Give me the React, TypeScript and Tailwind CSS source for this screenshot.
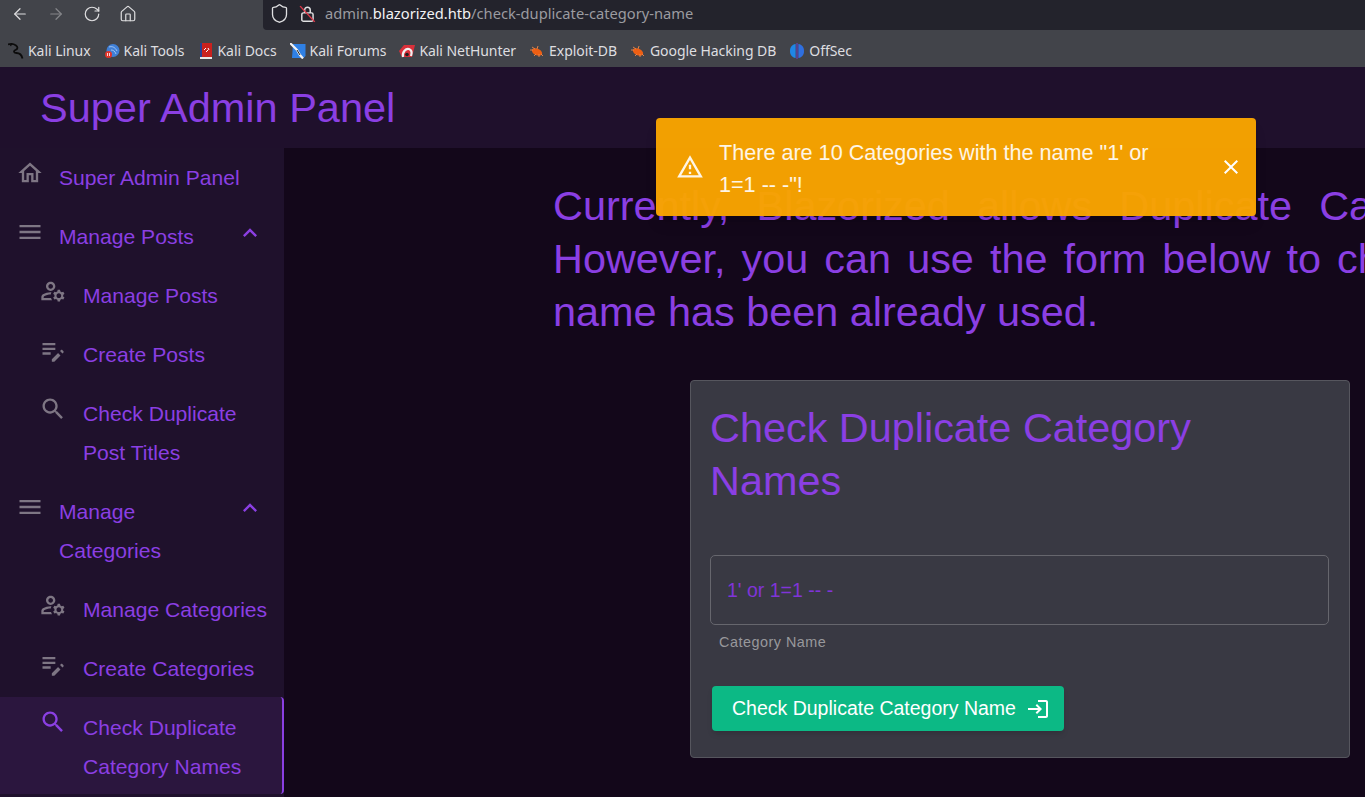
import React from "react";
import { ArrowLeft, ArrowRight, RotateCw, House, Shield } from "lucide-react";

const P = {
  home: "m12 5.69 5 4.5V18h-2v-6H9v6H7v-7.81zM12 3 2 12h3v8h6v-6h2v6h6v-8h3z",
  menu: "M3 18h18v-2H3v2zm0-5h18v-2H3v2zm0-7v2h18V6H3z",
  manage:
    "M4 18v-.65c0-.34.16-.66.41-.81C6.1 15.53 8.03 15 10 15c.03 0 .05 0 .08.01.1-.7.3-1.37.59-1.98-.22-.02-.44-.03-.67-.03-2.42 0-4.68.67-6.61 1.82-.88.52-1.39 1.5-1.39 2.53V20h9.26c-.42-.6-.75-1.28-.97-2H4zm6-6c2.21 0 4-1.79 4-4s-1.79-4-4-4-4 1.79-4 4 1.79 4 4 4zm0-6c1.1 0 2 .9 2 2s-.9 2-2 2-2-.9-2-2 .9-2 2-2zm10.75 10c0-.22-.03-.42-.06-.63l1.14-1.01-1-1.73-1.45.49c-.32-.27-.68-.48-1.08-.63L18 11h-2l-.3 1.49c-.4.15-.76.36-1.08.63l-1.45-.49-1 1.73 1.14 1.01c-.03.21-.06.41-.06.63s.03.42.06.63l-1.14 1.01 1 1.73 1.45-.49c.32.27.68.48 1.08.63L16 21h2l.3-1.49c.4-.15.76-.36 1.08-.63l1.45.49 1-1.73-1.14-1.01c.03-.21.06-.41.06-.63zM17 18c-1.1 0-2-.9-2-2s.9-2 2-2 2 .9 2 2-.9 2-2 2z",
  edit: "M3 10h11v2H3v-2zm0-2h11V6H3v2zm0 8h7v-2H3v2zm15.01-3.13.71-.71c.39-.39 1.02-.39 1.41 0l.71.71c.39.39.39 1.02 0 1.41l-.71.71-2.12-2.12zm-1.41 1.41L11 19.88V22h2.12l5.3-5.3-2.12-2.12z",
  search:
    "M15.5 14h-.79l-.28-.27C15.41 12.59 16 11.11 16 9.5 16 5.91 13.09 3 9.5 3S3 5.91 3 9.5 5.91 16 9.5 16c1.61 0 3.09-.59 4.23-1.57l.27.28v.79l5 4.99L20.49 19l-4.99-5zm-6 0C7.01 14 5 11.99 5 9.5S7.01 5 9.5 5 14 7.01 14 9.5 11.99 14 9.5 14z",
  up: "M7.41 15.41 12 10.83l4.59 4.58L18 14l-6-6-6 6z",
  warn: "M12 5.99 19.53 19H4.47L12 5.99M12 2 1 21h22L12 2zm1 14h-2v2h2v-2zm0-6h-2v4h2v-4z",
  close:
    "M19 6.41 17.59 5 12 10.59 6.41 5 5 6.41 10.59 12 5 17.59 6.41 19 12 13.41 17.59 19 19 17.59 13.41 12z",
  login:
    "M11 7 9.6 8.4l2.6 2.6H2v2h10.2l-2.6 2.6L11 17l5-5-5-5zm9 12h-8v2h8c1.1 0 2-.9 2-2V5c0-1.1-.9-2-2-2h-8v2h8v14z",
};

function Mi({ d, className }: { d: string; className: string }) {
  return (
    <svg viewBox="0 0 24 24" fill="currentColor" className={className}>
      <path d={d} />
    </svg>
  );
}

function KaliIcon() {
  return (
    <svg viewBox="0 0 16 16" className="w-4 h-4 shrink-0" fill="none" stroke="#0c0c0c" strokeWidth="1.8">
      <path d="M0 1.500c3-1 6-.5 8 1s2 3.500-.5 4.500-1.500 3 1 3 5 1 6 5.500" />
      <path d="M4 0L2.500 3" strokeWidth="1.200" />
    </svg>
  );
}
function ToolsIcon() {
  return (
    <svg viewBox="0 0 16 16" className="w-4 h-4 shrink-0">
      <circle cx="9" cy="7.500" r="6.500" fill="#3f7fd6" />
      <path d="M5 4c3-1 6 0 8 4M7 7c2 0 4 1 5 4" stroke="#bcd6f5" strokeWidth=".8" fill="none" />
      <circle cx="4.500" cy="11.500" r="3.500" fill="#e0352b" />
      <path d="M3.500 10v3M5.500 10v3" stroke="#fff" strokeWidth=".8" />
    </svg>
  );
}
function DocsIcon() {
  return (
    <svg viewBox="0 0 16 16" className="w-4 h-4 shrink-0">
      <rect x="2" y="0" width="12" height="15" fill="#c9211e" />
      <rect x="2" y="0" width="2" height="15" fill="#2a3f8f" />
      <rect x="2" y="14" width="12" height="2" fill="#e8e8e8" />
      <path d="M6 7l2-2M8 9l2-2M10 5l1 2" stroke="#fff" strokeWidth="1" />
    </svg>
  );
}
function ForumsIcon() {
  return (
    <svg viewBox="0 0 16 16" className="w-4 h-4 shrink-0">
      <path d="M3 1h12.500v12l-2 2H2z" fill="#2f80e4" />
      <path d="M0 0l7 7 3 5 3 3.500" stroke="#f2f2f2" strokeWidth="2.200" fill="none" />
      <path d="M7 7l3 5" stroke="#222" strokeWidth="1" />
    </svg>
  );
}
function HunterIcon() {
  return (
    <svg viewBox="0 0 16 16" className="w-4 h-4 shrink-0">
      <path d="M0 8l5-6h11l-3 12H3z" fill="#d9303a" />
      <path d="M4 14c-1-5 3-9 6-8s3 4 2 7" stroke="#f1f1f1" strokeWidth="2.200" fill="none" />
      <circle cx="8" cy="11.500" r="1.800" fill="#222" />
    </svg>
  );
}
function BugIcon() {
  return (
    <svg viewBox="0 0 16 16" className="w-4 h-4 shrink-0">
      <ellipse cx="8" cy="9" rx="5.500" ry="3.200" fill="#ee5f14" transform="rotate(25 8 9)" />
      <path d="M1 7h3M3 4l3 2M9 3l-1 3M5 13l2-2M10 14l0-3M14 13l-2-2" stroke="#f08a4a" strokeWidth=".9" />
    </svg>
  );
}
function OffSecIcon() {
  return (
    <svg viewBox="0 0 16 16" className="w-4 h-4 shrink-0">
      <path d="M6.600 1C3 1.500 1 4 1 8s2 6.500 5.600 7z" fill="#1f86e6" />
      <path d="M9.400 1C13 1.500 15 4 15 8s-2 6.500-5.600 7z" fill="#2f6fe0" />
      <rect x="7.500" y="0" width="1" height="16" fill="#6b3fd0" />
    </svg>
  );
}

const bookmarks: [React.ReactNode, string][] = [
  [<KaliIcon />, "Kali Linux"],
  [<ToolsIcon />, "Kali Tools"],
  [<DocsIcon />, "Kali Docs"],
  [<ForumsIcon />, "Kali Forums"],
  [<HunterIcon />, "Kali NetHunter"],
  [<BugIcon />, "Exploit-DB"],
  [<BugIcon />, "Google Hacking DB"],
  [<OffSecIcon />, "OffSec"],
];

function BrowserChrome() {
  return (
    <div className="bg-[#42444a] text-[#dedee0] shrink-0 font-['Noto_Sans',sans-serif]">
      <div className="h-[30px] flex">
        <div className="w-[263px] flex items-center pl-[11px] gap-[18px] pb-[3px]">
          <ArrowLeft className="w-[18px] h-[18px]" strokeWidth={1.6} />
          <ArrowRight className="w-[18px] h-[18px] text-[#85868a]" strokeWidth={1.6} />
          <RotateCw className="w-[18px] h-[18px]" strokeWidth={1.6} />
          <House className="w-[18px] h-[18px]" strokeWidth={1.6} />
        </div>
        <div className="flex-1 bg-[#23232c] rounded-bl-[4px] flex items-center pl-[6px] pb-[3px] text-[14.7px]">
          <Shield className="w-[21px] h-[21px] text-[#e0e0e2]" strokeWidth={1.5} />
          <svg viewBox="0 0 16 16" className="w-[18px] h-[18px] ml-[9px]" fill="none" stroke="#e0e0e2" strokeWidth="1.3">
            <rect x="2.500" y="7" width="10" height="7.500" rx="1.500" />
            <path d="M5 7V4.500a2.500 2.500 0 0 1 5 0V7" />
            <path d="M1 1l13 14" stroke="#e0394a" />
          </svg>
          <span className="ml-[8px] text-[#9b9ba0]">
            admin.<span className="text-[#f2f2f4]">blazorized.htb</span>/check-duplicate-category-name
          </span>
        </div>
      </div>
      <div className="h-[37px] flex items-center pl-[8px] gap-[13px] pt-[4px] text-[14px] tracking-[-0.05px]">
        {bookmarks.map(([icon, label]) => (
          <div key={label} className="flex items-center gap-[4px]">
            {icon}
            <span>{label}</span>
          </div>
        ))}
      </div>
    </div>
  );
}

type RowProps = {
  icon: string;
  children: React.ReactNode;
  sub?: boolean;
  chevron?: boolean;
  active?: boolean;
};

function Row({ icon, children, sub, chevron, active }: RowProps) {
  return (
    <div
      className={
        "flex items-start pr-[16px] leading-[39px] " +
        (sub ? "pl-[39px] " : "pl-[16px] ") +
        (active
          ? "pt-[11px] pb-[9px] bg-[#2b163e] border-r-2 border-[#8b3fe3] rounded-r-[4px] pr-[14px] h-[97px] -mt-px"
          : "py-[10px]")
      }
    >
      <Mi
        d={icon}
        className={"w-7 h-7 shrink-0 " + (active ? "text-[#8b3fe3]" : "mt-px text-[#7e7684]")}
      />
      <span className={"flex-1 " + (sub ? "ml-[16px]" : "ml-[15px]")}>{children}</span>
      {chevron && <Mi d={P.up} className="w-7 h-7 shrink-0 mt-[2px] mr-[4px] text-[#8b3fe3]" />}
    </div>
  );
}

function Sidebar() {
  return (
    <aside className="w-[284px] shrink-0 bg-[#1f112c] text-[21.1px] text-[#8b3fe3]">
      <Row icon={P.home}>Super Admin Panel</Row>
      <Row icon={P.menu} chevron>
        Manage Posts
      </Row>
      <Row icon={P.manage} sub>
        Manage Posts
      </Row>
      <Row icon={P.edit} sub>
        Create Posts
      </Row>
      <Row icon={P.search} sub>
        Check Duplicate Post Titles
      </Row>
      <Row icon={P.menu} chevron>
        Manage Categories
      </Row>
      <Row icon={P.manage} sub>
        Manage Categories
      </Row>
      <Row icon={P.edit} sub>
        Create Categories
      </Row>
      <Row icon={P.search} sub active>
        Check Duplicate Category Names
      </Row>
    </aside>
  );
}

function Card() {
  return (
    <section className="ml-[406px] mt-[41px] w-[660px] h-[378px] shrink-0 bg-[#393943] border border-[#56565e] rounded-[4px] pt-[21px] px-[19px]">
      <h2 className="text-[41.4px] leading-[53px] w-[600px] text-[#8b3fe3]">
        Check Duplicate Category Names
      </h2>
      <div className="mt-[47px] w-[619px] h-[70px] border border-[#66666d] rounded-[5px] flex items-center pl-[16px] pt-[2px] text-[19.5px] text-[#8034d8]">
        1' or 1=1 -- -
      </div>
      <div className="ml-[9px] mt-[8px] text-[14.4px] leading-[18px] tracking-[0.5px] text-[#98989c]">
        Category Name
      </div>
      <button className="ml-[2px] mt-[35px] w-[352px] h-[45px] bg-[#0cb985] rounded-[4px] shadow-md text-white text-[19.5px] flex items-center pl-[20px] pt-px gap-[10px]">
        Check Duplicate Category Name
        <Mi d={P.login} className="w-6 h-6" />
      </button>
    </section>
  );
}

function Toast() {
  return (
    <div className="absolute left-[656px] top-[118px] w-[600px] h-[98px] rounded-[4px] bg-[#f8a400]/[0.97] shadow-lg flex items-center pl-[20px] pr-[12px] text-[21.6px] leading-[32px] text-white/90">
      <Mi d={P.warn} className="w-7 h-7 shrink-0" />
      <div className="ml-[15px] w-[450px] pt-[3px]">There are 10 Categories with the name "1' or 1=1 -- -"!</div>
      <Mi d={P.close} className="w-6 h-6 ml-auto mr-[1px] text-white" />
    </div>
  );
}

export default function App() {
  return (
    <div className="relative w-[1365px] h-[797px] overflow-hidden flex flex-col bg-[#13071a] font-['Liberation_Sans',sans-serif]">
      <BrowserChrome />
      <header className="h-[81px] shrink-0 bg-[#1f102c] flex items-center pl-[40px] pt-[2px] text-[41.5px] text-[#8b3fe3]">
        Super Admin Panel
      </header>
      <div className="flex flex-1 min-h-0">
        <Sidebar />
        <main className="flex-1 min-w-0 overflow-hidden">
          <p className="ml-[269px] mt-[32px] w-[1152px] text-[41.4px] leading-[53px] text-justify text-[#8b3fe3]">
            Currently, Blazorized allows Duplicate Categories to exist. However, you can use the form below to check if a Category name has been already used.
          </p>
          <Card />
        </main>
      </div>
      <Toast />
    </div>
  );
}
